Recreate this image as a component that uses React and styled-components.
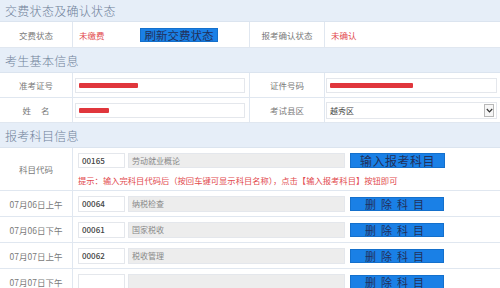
import React from "react";
import styled, { createGlobalStyle } from "styled-components";

const GlobalStyle = createGlobalStyle`
  html, body { margin: 0; padding: 0; background: #fff; overflow: hidden; }
  body { font-family: "Noto Sans CJK SC", "Noto Sans", sans-serif; }
`;

const Page = styled.div`
  width: 500px;
  height: 288px;
  overflow: hidden;
  background: #fff;
`;

const SectionHead = styled.div`
  height: ${ p => p.h || 25 }px;
  background: #e6eef8;
  color: #6f8199;
  font-size: 12px;
  font-weight: 300;
  line-height: ${ p => p.h || 25 }px;
  padding-left: 5px;
  letter-spacing: 0.3px;
  border-bottom: 1px solid #dbe4ef;
  box-sizing: border-box;
`;

const InfoRow = styled.div`
  display: grid;
  grid-template-columns: 73px 177px 75px 175px;
  height: ${ p => p.h || 25 }px;
  border-bottom: 1px solid #e0e7f0;
  box-sizing: border-box;
`;

const SubjectRow = styled.div`
  display: grid;
  grid-template-columns: 73px 427px;
  height: ${ p => p.h || 26 }px;
  border-bottom: 1px solid #e0e7f0;
  box-sizing: border-box;
`;

const Label = styled.div`
  display: flex;
  align-items: center;
  justify-content: center;
  font-size: 8.5px;
  color: #7a7a7a;
  letter-spacing: ${ p => p.spread ? "10px" : "0" };
  border-right: 1px solid #e0e7f0;
  ${ p => p.spread && "padding-left: 10px;" }
`;

const Cell = styled.div`
  display: flex;
  align-items: center;
  gap: 3px;
  padding-left: ${ p => p.pl || 4 }px;
  border-right: ${ p => p.noLine ? "none" : "1px solid #e0e7f0" };
`;

const RedText = styled.span`
  color: #e24a4e;
  font-size: 8.5px;
  padding-left: 3px;
  white-space: nowrap;
  ${ p => p.w && `width: ${ p.w }px;` }
`;

const BlueButton = styled.div`
  background: #1a80e6;
  color: #22305a;
  font-size: ${ p => p.fs || 11.5 }px;
  height: ${ p => p.h || 14 }px;
  width: ${ p => p.w }px;
  display: flex;
  align-items: center;
  justify-content: center;
  letter-spacing: ${ p => p.ls || 0 }px;
  border: 1px solid #1470cc;
  box-sizing: border-box;
  margin-left: ${ p => p.ml || 0 }px;
  white-space: nowrap;
`;

const TextBox = styled.div`
  width: ${ p => p.w }px;
  height: ${ p => p.h || 15 }px;
  border: 1px solid #e4e7ec;
  background: ${ p => p.gray ? "#ededed" : "#fff" };
  box-sizing: border-box;
  display: flex;
  align-items: center;
  padding-left: 3px;
  font-size: 8px;
  color: ${ p => p.gray ? "#888" : "#444" };
  font-weight: ${ p => p.bold ? 500 : 400 };
  position: relative;
`;

const Redacted = styled.div`
  height: 5px;
  width: ${ p => p.w }px;
  background: #e0363c;
  border-radius: 1px;
`;

const SelectArrow = styled.div`
  position: absolute;
  right: 2px;
  top: 1px;
  width: 10px;
  height: 13px;
  border: 1px solid #b8b8b8;
  box-sizing: border-box;
  display: flex;
  align-items: center;
  justify-content: center;
  background: #f6f6f6;
`;

const SubjectCell = styled.div`
  display: flex;
  flex-direction: column;
  justify-content: center;
  padding-left: 5px;
  gap: 6px;
`;

const Line = styled.div`
  display: flex;
  align-items: center;
  gap: 3px;
`;

const Tip = styled.div`
  color: #e24a4e;
  font-size: 8.3px;
  white-space: nowrap;
`;

const subjects = [
  { time: "07月06日上午", code: "00064", name: "纳税检查" },
  { time: "07月06日下午", code: "00061", name: "国家税收" },
  { time: "07月07日上午", code: "00062", name: "税收管理" },
  { time: "07月07日下午", code: "", name: "" },
];

export default function App(){
  return ( <>
    <GlobalStyle />
    <Page>
      <SectionHead h={ 22 }>交费状态及确认状态</SectionHead>
      <InfoRow h={ 26 }>
        <Label>交费状态</Label>
        <Cell pl={ 3 }>
          <RedText w={ 58 }>未缴费</RedText>
          <BlueButton w={ 78 } h={ 14 }>刷新交费状态</BlueButton>
        </Cell>
        <Label>报考确认状态</Label>
        <Cell noLine pl={ 3 }>
          <RedText>未确认</RedText>
        </Cell>
      </InfoRow>
      <SectionHead>考生基本信息</SectionHead>
      <InfoRow>
        <Label>准考证号</Label>
        <Cell pl={ 2 }>
          <TextBox w={ 170 }><Redacted w={ 59 } /></TextBox>
        </Cell>
        <Label>证件号码</Label>
        <Cell noLine pl={ 1 }>
          <TextBox w={ 171 }><Redacted w={ 83 } /></TextBox>
        </Cell>
      </InfoRow>
      <InfoRow>
        <Label spread>姓名</Label>
        <Cell pl={ 2 }>
          <TextBox w={ 170 }><Redacted w={ 30 } /></TextBox>
        </Cell>
        <Label>考试县区</Label>
        <Cell noLine pl={ 1 }>
          <TextBox w={ 171 } h={ 17 }>
            越秀区
            <SelectArrow>
              <svg width="7" height="5" viewBox="0 0 7 5">
                <path d="M0.8 1 L3.5 3.8 L6.2 1" fill="none" stroke="#333" strokeWidth="1.2" />
              </svg>
            </SelectArrow>
          </TextBox>
        </Cell>
      </InfoRow>
      <SectionHead>报考科目信息</SectionHead>
      <SubjectRow h={ 43 }>
        <Label>科目代码</Label>
        <SubjectCell>
          <Line>
            <TextBox w={ 47 } bold>00165</TextBox>
            <TextBox w={ 217 } gray>劳动就业概论</TextBox>
            <BlueButton w={ 95 } h={ 15 } fs={ 12 } ls={ 0.5 } ml={ 2 }>输入报考科目</BlueButton>
          </Line>
          <Tip>提示：输入完科目代码后（按回车键可显示科目名称），点击【输入报考科目】按钮即可</Tip>
        </SubjectCell>
      </SubjectRow>
      { subjects.map( s => (
        <SubjectRow key={ s.time }>
          <Label>{ s.time }</Label>
          <SubjectCell>
            <Line>
              <TextBox w={ 47 } h={ 16 } bold>{ s.code }</TextBox>
              <TextBox w={ 217 } h={ 16 } gray>{ s.name }</TextBox>
              <BlueButton w={ 94 } h={ 14 } fs={ 11 } ls={ 5 } ml={ 2 }>删除科目</BlueButton>
            </Line>
          </SubjectCell>
        </SubjectRow>
      ) ) }
    </Page>
  </> );
}
